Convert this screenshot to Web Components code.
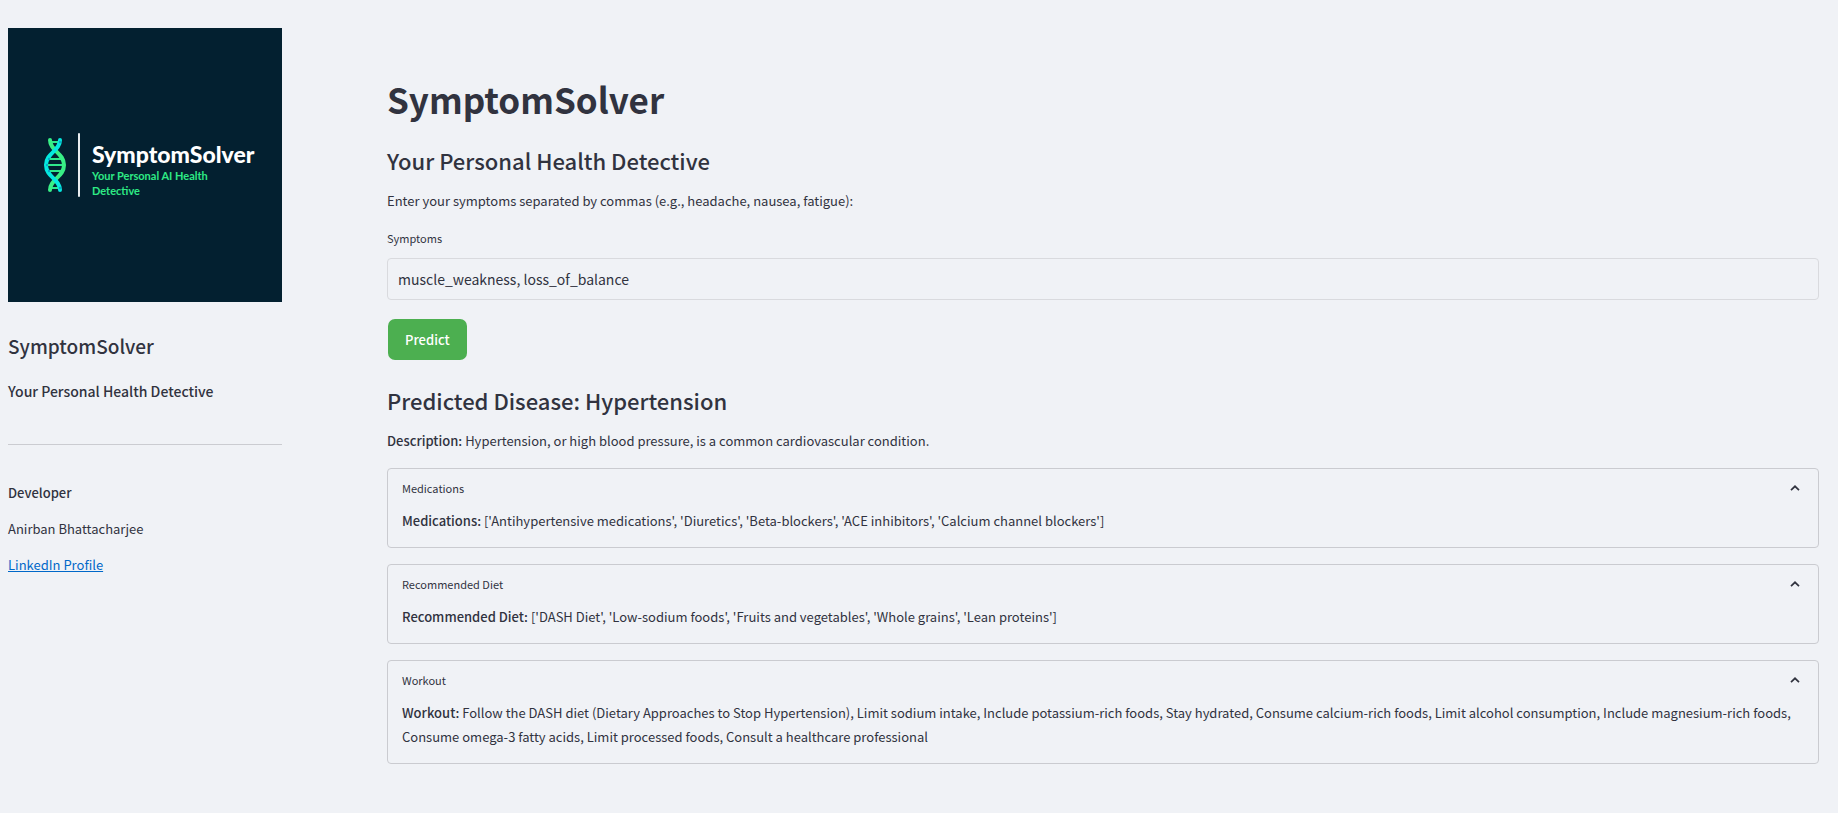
<!DOCTYPE html>
<html lang="en">
<head>
<meta charset="utf-8">
<title>SymptomSolver</title>
<style>
  body {
    margin: 0;
    background: #f0f2f6;
    color: #31333f;
    font-family: "Noto Sans CJK SC", "Noto Sans", sans-serif;
    font-size: 13px;
    line-height: 24px;
  }
</style>
</head>
<body>
<symptom-app></symptom-app>
<script>
  function define(name, html, setup) {
    const template = document.createElement('template');
    template.innerHTML = html;
    customElements.define(name, class extends HTMLElement {
      constructor() {
        super();
        this.attachShadow({ mode: 'open' }).append(template.content.cloneNode(true));
      }
      connectedCallback() {
        if (setup) setup(this);
      }
    });
  }

  define('brand-logo', `
    <style>
      :host { display: flex; align-items: center; box-sizing: border-box; aspect-ratio: 1; padding-left: 35px; background: #032030; }
      .dna { flex: none; width: 24px; height: 56px; }
      .bar { flex: none; width: 2px; height: 64px; margin: 0 12px 0 11px; border-radius: 1px; background: #e9edf0; }
      .text { padding-top: 8px; }
      .name { color: #fff; font: 900 23px/28px Lato, sans-serif; }
      .tag { width: 130px; color: #2eea85; font: 700 11px/15px Lato, sans-serif; }
    </style>
    <svg class="dna" viewBox="0 0 24 56" fill="none" stroke-linecap="round" aria-hidden="true">
      <g stroke="#2fe98c" stroke-width="2">
        <path d="M7 5h10M6 22h12M4 28h16M6 34h12M7 51h10"/>
        <path d="M7 3C7 14 21 16 21 28S7 42 7 53" stroke="#38ef86" stroke-width="4"/>
      </g>
      <path d="M17 3C17 14 3 16 3 28S17 42 17 53" stroke="#04e9df" stroke-width="4"/>
      <g fill="#0aa7c9">
        <circle cx="17" cy="5" r="1.2"/><circle cx="6" cy="22" r="1.2"/><circle cx="4" cy="28" r="1.2"/>
        <circle cx="6" cy="34" r="1.2"/><circle cx="17" cy="51" r="1.2"/>
      </g>
    </svg>
    <div class="bar"></div>
    <div class="text"><div class="name">SymptomSolver</div><div class="tag">Your Personal AI Health Detective</div></div>
  `);

  define('side-panel', `
    <style>
      :host { display: block; padding: 28px 0 0 8px; }
      h2 { margin: 29px 0 0; font-size: 19px; line-height: 30px; font-weight: 500; }
      h3 { margin: 18px 0 0; font-size: 14px; line-height: 24px; font-weight: 500; }
      hr { margin: 41px 0 36px; border: 0; border-top: 1px solid #cbccd1; }
      p { margin: 0 0 12px; }
      strong { font-weight: 500; }
      a { color: #0068c9; text-decoration: underline; }
    </style>
    <brand-logo></brand-logo>
    <h2>SymptomSolver</h2>
    <h3>Your Personal Health Detective</h3>
    <hr>
    <p><strong>Developer</strong></p>
    <p>Anirban Bhattacharjee</p>
    <p><a href="#linkedin">LinkedIn Profile</a></p>
  `);

  define('symptom-form', `
    <style>
      :host { display: block; }
      form { margin: 0; }
      label { display: block; margin-bottom: 11px; font-size: 11px; line-height: 18px; }
      input {
        display: block; box-sizing: border-box; width: 100%; height: 42px; margin: 0 0 19px; padding: 0 10px;
        border: 1px solid #d9dade; border-radius: 4px; outline: 0; background: transparent;
        color: inherit; font: inherit; font-size: 14px;
      }
      button {
        display: block; height: 41px; margin-left: 1px; padding: 0 17px; border: 0; border-radius: 7px;
        background: #4caf50; color: #fff; font: inherit; font-weight: 500;
      }
    </style>
    <form>
      <label for="symptoms">Symptoms</label>
      <input id="symptoms" type="text" value="muscle_weakness, loss_of_balance">
      <button type="button">Predict</button>
    </form>
  `);

  define('result-expander', `
    <style>
      :host { display: block; }
      details { border: 1px solid #cacbd0; border-radius: 4px; }
      summary { display: flex; justify-content: space-between; align-items: center; padding: 10px 18px 0 14px; font-size: 11px; line-height: 18px; list-style: none; cursor: pointer; }
      svg { width: 10px; height: 6px; }
      .body { padding: 12px 16px 14px 14px; }
    </style>
    <details open>
      <summary><span></span><svg viewBox="0 0 10 6" fill="none" stroke="#31333f" stroke-width="1.700" aria-hidden="true"><path d="M1 5.200 5 1.300l4 3.900"/></svg></summary>
      <div class="body"><slot></slot></div>
    </details>
  `, el => { el.shadowRoot.querySelector('span').textContent = el.getAttribute('label'); });

  define('result-panel', `
    <style>
      :host { display: block; }
      h2 { margin: 0 0 14px; font-size: 22px; line-height: 30px; font-weight: 500; }
      p { margin: 0 0 15px; }
      strong { font-weight: 500; }
      .list { display: grid; gap: 16px; }
    </style>
    <h2>Predicted Disease: Hypertension</h2>
    <p><strong>Description:</strong> Hypertension, or high blood pressure, is a common cardiovascular condition.</p>
    <div class="list">
      <result-expander label="Medications"><strong>Medications:</strong> ['Antihypertensive medications', 'Diuretics', 'Beta-blockers', 'ACE inhibitors', 'Calcium channel blockers']</result-expander>
      <result-expander label="Recommended Diet"><strong>Recommended Diet:</strong> ['DASH Diet', 'Low-sodium foods', 'Fruits and vegetables', 'Whole grains', 'Lean proteins']</result-expander>
      <result-expander label="Workout"><strong>Workout:</strong> Follow the DASH diet (Dietary Approaches to Stop Hypertension), Limit sodium intake, Include potassium-rich foods, Stay hydrated, Consume calcium-rich foods, Limit alcohol consumption, Include magnesium-rich foods, Consume omega-3 fatty acids, Limit processed foods, Consult a healthcare professional</result-expander>
    </div>
  `);

  define('symptom-app', `
    <style>
      :host { display: grid; grid-template-columns: 282px minmax(0, 1fr); column-gap: 105px; padding-right: 19px; }
      main { padding: 75px 0 48px; }
      h1 { margin: 0; font-size: 35px; line-height: 48px; font-weight: 700; }
      h2 { margin: 22px 0 14px; font-size: 22px; line-height: 30px; font-weight: 500; }
      p { margin: 0 0 16px; }
      result-panel { margin-top: 25px; }
    </style>
    <side-panel></side-panel>
    <main>
      <h1>SymptomSolver</h1>
      <h2>Your Personal Health Detective</h2>
      <p>Enter your symptoms separated by commas (e.g., headache, nausea, fatigue):</p>
      <symptom-form></symptom-form>
      <result-panel></result-panel>
    </main>
  `);
</script>
</body>
</html>
